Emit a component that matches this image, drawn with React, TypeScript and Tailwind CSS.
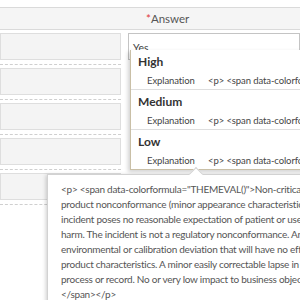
import React from "react";

const rows = [0, 1, 2, 3, 4];

const items = ["High", "Medium", "Low"];

const tipLines = [
  '<p> <span data-colorformula="THEMEVAL()">Non-critical',
  "product nonconformance (minor appearance characteristics) where the",
  "incident poses no reasonable expectation of patient or user",
  "harm. The incident is not a regulatory nonconformance. An",
  "environmental or calibration deviation that will have no effect on",
  "product characteristics. A minor easily correctable lapse in",
  "process or record. No or very low impact to business objectives.",
  "</span></p>",
];

export default function App() {
  return (
    <div
      className="relative w-[300px] h-[300px] overflow-hidden bg-white text-[#444]"
      style={{ fontFamily: 'Lato, "Open Sans", sans-serif' }}
    >
      <div className="mt-[7px] h-[23px] bg-[#f5f5f5] border-y border-[#dadada] flex items-center pl-[146px] text-[11.5px] text-[#555]">
        <span className="text-[#e03a3a]">*</span>
        <span>Answer</span>
      </div>
      <div className="flex">
        <div className="w-[125px] pr-[4px]">
          {rows.map((r) => (
            <div
              key={r}
              className="pt-[3px] pb-[4px] border-b border-dashed border-[#cfcfcf]"
            >
              <div className="h-[27px] bg-[#f4f4f4] border border-[#dedede]" />
            </div>
          ))}
        </div>
        <div className="flex-1 pl-[3px] pt-[3px]">
          <div className="h-[27px] border border-[#c4c4c4] bg-white pl-[4px] text-[10.5px] leading-[28px] text-[#444]">
            Yes
          </div>
        </div>
      </div>

      <div className="absolute left-[130px] top-[50px] w-[190px] h-[120px] bg-white border-l border-b border-[#c9bfa6] shadow-[-2px_2px_4px_rgba(0,0,0,0.18)]">
        {items.map((it, i) => (
          <div
            key={it}
            className={`h-[40px] ${i < 2 ? "border-b border-[#dedede]" : ""}`}
          >
            <div className="pl-[7px] pt-[3px] text-[12px] leading-[18px] font-bold text-[#333]">
              {it}
            </div>
            <div className="mt-[4px] flex leading-[12px] text-[9.5px] text-[#444] whitespace-nowrap tracking-[-0.1px]">
              <span className="shrink-0 pl-[16px] w-[77px]">Explanation</span>
              <span className="shrink-0">{"<p> <span data-colorformula"}</span>
            </div>
          </div>
        ))}
      </div>

      <div className="absolute left-[47px] top-[174px] w-[280px] h-[140px] bg-white border border-[#d2d2d2] shadow-[-1px_1px_4px_rgba(0,0,0,0.2)]">
        <div className="absolute left-[143px] top-[-6px] w-[10px] h-[10px] bg-white border-t border-l border-[#d2d2d2] rotate-45" />
        <div className="relative pl-[13px] pt-[7px] text-[10px] leading-[15px] text-[#555] whitespace-nowrap tracking-[-0.25px]">
          {tipLines.map((l, i) => (
            <div key={i}>{l}</div>
          ))}
        </div>
      </div>
    </div>
  );
}
